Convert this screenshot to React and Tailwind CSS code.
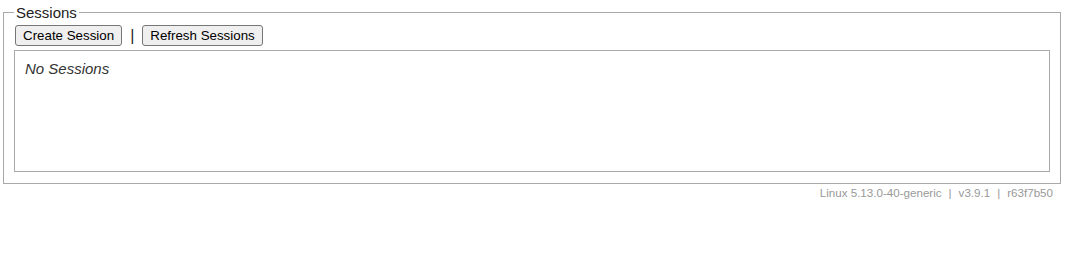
export default function App() {
  return (
    <div className="font-['Liberation_Sans',Arial,sans-serif] text-black">
      <fieldset className="ml-[3px] mt-[4px] w-[1058px] border border-[#a9a9a9] px-[10px] pb-[11px] pt-[4px]">
        <legend className="ml-[0px] px-[2px] text-[15px] leading-[17px] text-[#222]">Sessions</legend>
        <div className="flex items-center h-[21px] ml-[1px]">
          <button className="h-[21px] px-[7px] bg-[#efefef] border border-[#767676] rounded-[3px] text-[13.33px] leading-[15px] text-black">
            Create Session
          </button>
          <span className="mx-[8px] text-[16px] leading-[18px] text-[#222]">|</span>
          <button className="h-[21px] px-[7px] bg-[#efefef] border border-[#767676] rounded-[3px] text-[13.33px] leading-[15px] text-black">
            Refresh Sessions
          </button>
        </div>
        <div className="mt-[4px] h-[122px] border border-[#a9a9a9] px-[10px] pt-[9px]">
          <div className="italic text-[15px] leading-[17px] text-[#333]">No Sessions</div>
        </div>
      </fieldset>
      <div className="mt-[2px] pr-[15px] flex justify-end text-[11.6px] leading-[14px] text-[#999]">
        <span>Linux 5.13.0-40-generic</span>
        <span className="mx-[7px]">|</span>
        <span>v3.9.1</span>
        <span className="mx-[7px]">|</span>
        <span>r63f7b50</span>
      </div>
    </div>
  );
}
